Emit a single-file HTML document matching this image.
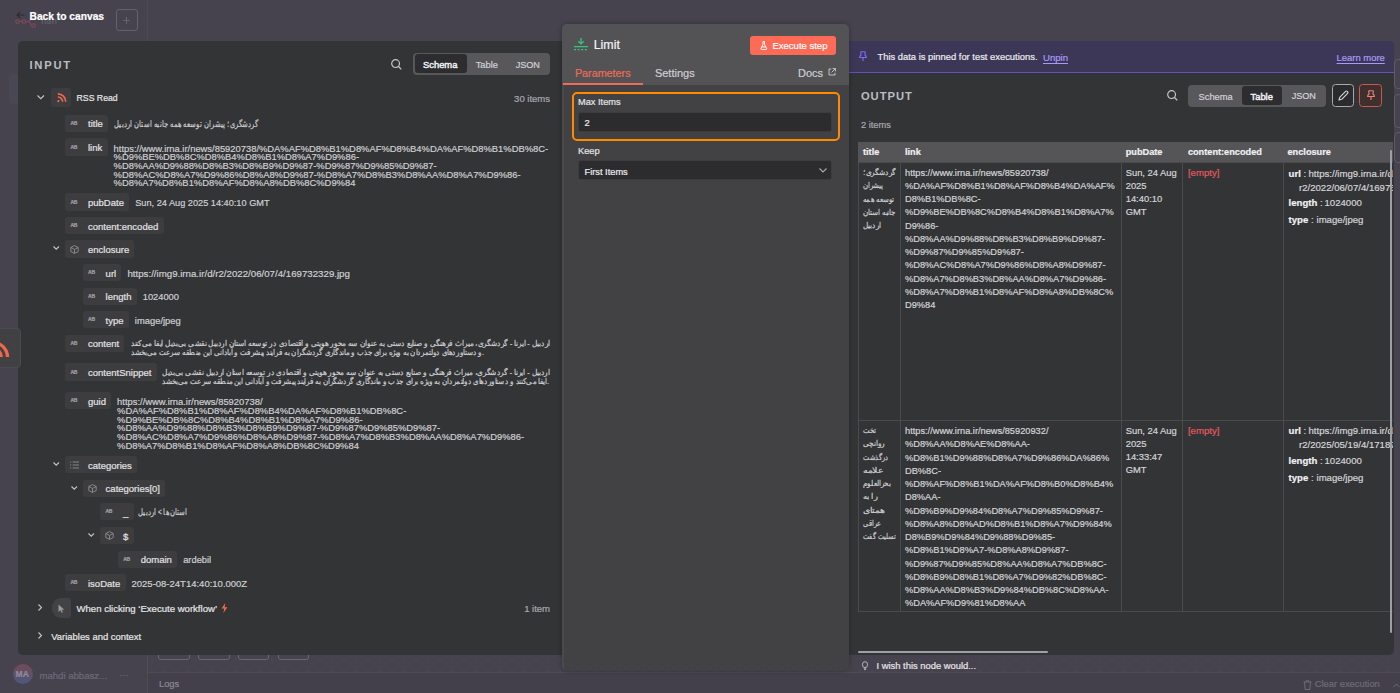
<!DOCTYPE html>
<html><head><meta charset="utf-8"><style>
*{box-sizing:border-box;margin:0;padding:0}
html,body{width:1400px;height:693px;overflow:hidden}
body{background:#46434f;font-family:"Liberation Sans",sans-serif;color:#e6e6e8;position:relative}
.a{position:absolute;white-space:nowrap;line-height:1;-webkit-text-stroke:0.2px currentColor}
svg{position:absolute;overflow:visible}
</style></head><body>
<div class="a" style="left:8.50px;top:74.00px;width:14.00px;height:30.00px;background:#4a4754;border-radius:3px"></div>
<div class="a" style="left:146.50px;top:0.00px;width:1.00px;height:41.00px;background:#4d4a56"></div>
<div class="a" style="left:147.00px;top:655.00px;width:1.00px;height:38.00px;background:#504d59"></div>
<div class="a" style="left:147.50px;top:672.00px;width:1253.00px;height:21.00px;background:#43404c;border-top:1px solid #4e4b58"></div>
<svg style="left:0;top:659px" width="1400" height="2"><g fill="#5a5766"><circle cx="152" cy="0" r="0.6"/><circle cx="164" cy="0" r="0.6"/><circle cx="176" cy="0" r="0.6"/><circle cx="188" cy="0" r="0.6"/><circle cx="200" cy="0" r="0.6"/><circle cx="212" cy="0" r="0.6"/><circle cx="224" cy="0" r="0.6"/><circle cx="236" cy="0" r="0.6"/><circle cx="248" cy="0" r="0.6"/><circle cx="260" cy="0" r="0.6"/><circle cx="272" cy="0" r="0.6"/><circle cx="284" cy="0" r="0.6"/><circle cx="296" cy="0" r="0.6"/><circle cx="308" cy="0" r="0.6"/><circle cx="320" cy="0" r="0.6"/><circle cx="332" cy="0" r="0.6"/><circle cx="344" cy="0" r="0.6"/><circle cx="356" cy="0" r="0.6"/><circle cx="368" cy="0" r="0.6"/><circle cx="380" cy="0" r="0.6"/><circle cx="392" cy="0" r="0.6"/><circle cx="404" cy="0" r="0.6"/><circle cx="416" cy="0" r="0.6"/><circle cx="428" cy="0" r="0.6"/><circle cx="440" cy="0" r="0.6"/><circle cx="452" cy="0" r="0.6"/><circle cx="464" cy="0" r="0.6"/><circle cx="476" cy="0" r="0.6"/><circle cx="488" cy="0" r="0.6"/><circle cx="500" cy="0" r="0.6"/><circle cx="512" cy="0" r="0.6"/><circle cx="524" cy="0" r="0.6"/><circle cx="536" cy="0" r="0.6"/><circle cx="548" cy="0" r="0.6"/><circle cx="560" cy="0" r="0.6"/><circle cx="572" cy="0" r="0.6"/><circle cx="584" cy="0" r="0.6"/><circle cx="596" cy="0" r="0.6"/><circle cx="608" cy="0" r="0.6"/><circle cx="620" cy="0" r="0.6"/><circle cx="632" cy="0" r="0.6"/><circle cx="644" cy="0" r="0.6"/><circle cx="656" cy="0" r="0.6"/><circle cx="668" cy="0" r="0.6"/><circle cx="680" cy="0" r="0.6"/><circle cx="692" cy="0" r="0.6"/><circle cx="704" cy="0" r="0.6"/><circle cx="716" cy="0" r="0.6"/><circle cx="728" cy="0" r="0.6"/><circle cx="740" cy="0" r="0.6"/><circle cx="752" cy="0" r="0.6"/><circle cx="764" cy="0" r="0.6"/><circle cx="776" cy="0" r="0.6"/><circle cx="788" cy="0" r="0.6"/><circle cx="800" cy="0" r="0.6"/><circle cx="812" cy="0" r="0.6"/><circle cx="824" cy="0" r="0.6"/><circle cx="836" cy="0" r="0.6"/><circle cx="848" cy="0" r="0.6"/><circle cx="860" cy="0" r="0.6"/><circle cx="872" cy="0" r="0.6"/><circle cx="884" cy="0" r="0.6"/><circle cx="896" cy="0" r="0.6"/><circle cx="908" cy="0" r="0.6"/><circle cx="920" cy="0" r="0.6"/><circle cx="932" cy="0" r="0.6"/><circle cx="944" cy="0" r="0.6"/><circle cx="956" cy="0" r="0.6"/><circle cx="968" cy="0" r="0.6"/><circle cx="980" cy="0" r="0.6"/><circle cx="992" cy="0" r="0.6"/><circle cx="1004" cy="0" r="0.6"/><circle cx="1016" cy="0" r="0.6"/><circle cx="1028" cy="0" r="0.6"/><circle cx="1040" cy="0" r="0.6"/><circle cx="1052" cy="0" r="0.6"/><circle cx="1064" cy="0" r="0.6"/><circle cx="1076" cy="0" r="0.6"/><circle cx="1088" cy="0" r="0.6"/><circle cx="1100" cy="0" r="0.6"/><circle cx="1112" cy="0" r="0.6"/><circle cx="1124" cy="0" r="0.6"/><circle cx="1136" cy="0" r="0.6"/><circle cx="1148" cy="0" r="0.6"/><circle cx="1160" cy="0" r="0.6"/><circle cx="1172" cy="0" r="0.6"/><circle cx="1184" cy="0" r="0.6"/><circle cx="1196" cy="0" r="0.6"/><circle cx="1208" cy="0" r="0.6"/><circle cx="1220" cy="0" r="0.6"/><circle cx="1232" cy="0" r="0.6"/><circle cx="1244" cy="0" r="0.6"/><circle cx="1256" cy="0" r="0.6"/><circle cx="1268" cy="0" r="0.6"/><circle cx="1280" cy="0" r="0.6"/><circle cx="1292" cy="0" r="0.6"/><circle cx="1304" cy="0" r="0.6"/><circle cx="1316" cy="0" r="0.6"/><circle cx="1328" cy="0" r="0.6"/><circle cx="1340" cy="0" r="0.6"/><circle cx="1352" cy="0" r="0.6"/><circle cx="1364" cy="0" r="0.6"/><circle cx="1376" cy="0" r="0.6"/><circle cx="1388" cy="0" r="0.6"/></g></svg>
<svg style="left:0;top:671px" width="1400" height="2"><g fill="#5a5766"><circle cx="152" cy="0" r="0.6"/><circle cx="164" cy="0" r="0.6"/><circle cx="176" cy="0" r="0.6"/><circle cx="188" cy="0" r="0.6"/><circle cx="200" cy="0" r="0.6"/><circle cx="212" cy="0" r="0.6"/><circle cx="224" cy="0" r="0.6"/><circle cx="236" cy="0" r="0.6"/><circle cx="248" cy="0" r="0.6"/><circle cx="260" cy="0" r="0.6"/><circle cx="272" cy="0" r="0.6"/><circle cx="284" cy="0" r="0.6"/><circle cx="296" cy="0" r="0.6"/><circle cx="308" cy="0" r="0.6"/><circle cx="320" cy="0" r="0.6"/><circle cx="332" cy="0" r="0.6"/><circle cx="344" cy="0" r="0.6"/><circle cx="356" cy="0" r="0.6"/><circle cx="368" cy="0" r="0.6"/><circle cx="380" cy="0" r="0.6"/><circle cx="392" cy="0" r="0.6"/><circle cx="404" cy="0" r="0.6"/><circle cx="416" cy="0" r="0.6"/><circle cx="428" cy="0" r="0.6"/><circle cx="440" cy="0" r="0.6"/><circle cx="452" cy="0" r="0.6"/><circle cx="464" cy="0" r="0.6"/><circle cx="476" cy="0" r="0.6"/><circle cx="488" cy="0" r="0.6"/><circle cx="500" cy="0" r="0.6"/><circle cx="512" cy="0" r="0.6"/><circle cx="524" cy="0" r="0.6"/><circle cx="536" cy="0" r="0.6"/><circle cx="548" cy="0" r="0.6"/><circle cx="560" cy="0" r="0.6"/><circle cx="572" cy="0" r="0.6"/><circle cx="584" cy="0" r="0.6"/><circle cx="596" cy="0" r="0.6"/><circle cx="608" cy="0" r="0.6"/><circle cx="620" cy="0" r="0.6"/><circle cx="632" cy="0" r="0.6"/><circle cx="644" cy="0" r="0.6"/><circle cx="656" cy="0" r="0.6"/><circle cx="668" cy="0" r="0.6"/><circle cx="680" cy="0" r="0.6"/><circle cx="692" cy="0" r="0.6"/><circle cx="704" cy="0" r="0.6"/><circle cx="716" cy="0" r="0.6"/><circle cx="728" cy="0" r="0.6"/><circle cx="740" cy="0" r="0.6"/><circle cx="752" cy="0" r="0.6"/><circle cx="764" cy="0" r="0.6"/><circle cx="776" cy="0" r="0.6"/><circle cx="788" cy="0" r="0.6"/><circle cx="800" cy="0" r="0.6"/><circle cx="812" cy="0" r="0.6"/><circle cx="824" cy="0" r="0.6"/><circle cx="836" cy="0" r="0.6"/><circle cx="848" cy="0" r="0.6"/><circle cx="860" cy="0" r="0.6"/><circle cx="872" cy="0" r="0.6"/><circle cx="884" cy="0" r="0.6"/><circle cx="896" cy="0" r="0.6"/><circle cx="908" cy="0" r="0.6"/><circle cx="920" cy="0" r="0.6"/><circle cx="932" cy="0" r="0.6"/><circle cx="944" cy="0" r="0.6"/><circle cx="956" cy="0" r="0.6"/><circle cx="968" cy="0" r="0.6"/><circle cx="980" cy="0" r="0.6"/><circle cx="992" cy="0" r="0.6"/><circle cx="1004" cy="0" r="0.6"/><circle cx="1016" cy="0" r="0.6"/><circle cx="1028" cy="0" r="0.6"/><circle cx="1040" cy="0" r="0.6"/><circle cx="1052" cy="0" r="0.6"/><circle cx="1064" cy="0" r="0.6"/><circle cx="1076" cy="0" r="0.6"/><circle cx="1088" cy="0" r="0.6"/><circle cx="1100" cy="0" r="0.6"/><circle cx="1112" cy="0" r="0.6"/><circle cx="1124" cy="0" r="0.6"/><circle cx="1136" cy="0" r="0.6"/><circle cx="1148" cy="0" r="0.6"/><circle cx="1160" cy="0" r="0.6"/><circle cx="1172" cy="0" r="0.6"/><circle cx="1184" cy="0" r="0.6"/><circle cx="1196" cy="0" r="0.6"/><circle cx="1208" cy="0" r="0.6"/><circle cx="1220" cy="0" r="0.6"/><circle cx="1232" cy="0" r="0.6"/><circle cx="1244" cy="0" r="0.6"/><circle cx="1256" cy="0" r="0.6"/><circle cx="1268" cy="0" r="0.6"/><circle cx="1280" cy="0" r="0.6"/><circle cx="1292" cy="0" r="0.6"/><circle cx="1304" cy="0" r="0.6"/><circle cx="1316" cy="0" r="0.6"/><circle cx="1328" cy="0" r="0.6"/><circle cx="1340" cy="0" r="0.6"/><circle cx="1352" cy="0" r="0.6"/><circle cx="1364" cy="0" r="0.6"/><circle cx="1376" cy="0" r="0.6"/><circle cx="1388" cy="0" r="0.6"/></g></svg>
<svg style="left:14.6px;top:15.6px" width="22" height="12" viewBox="0 0 22 12"><g fill="none" stroke="#86475c" stroke-width="1.1"><circle cx="2.5" cy="5.5" r="1.8"/><circle cx="9" cy="5.5" r="1.8"/><circle cx="18.5" cy="9.5" r="1.8"/><circle cx="18.5" cy="1.8" r="1.6"/><path d="M4.3 5.5h2.9M10.8 5.5h2.5q1.5 0 2.2 2l.8 1.5M13.3 5.5q1.5 0 2.2-2l.8-1.3"/></g></svg>
<div class="a " style="left:41.00px;top:16.88px;font-size:9px;color:#5e5b68;font-weight:bold;">n8n</div>
<svg style="left:16px;top:11px" width="9" height="8" viewBox="0 0 9 8"><path d="M8.5 4H1M4.2 0.8L1 4l3.2 3.2" fill="none" stroke="#2b2a30" stroke-width="1.1"/></svg>
<div class="a " style="left:29.50px;top:11.53px;font-size:10.24px;color:#ffffff;font-weight:bold;">Back to canvas</div>
<div class="a" style="left:115.50px;top:9.20px;width:22.00px;height:22.00px;border:1px solid #64616e;border-radius:3px"></div>
<svg style="left:123px;top:16.7px" width="7" height="7" viewBox="0 0 7 7"><path d="M3.5 0v7M0 3.5h7" stroke="#6a6773" stroke-width="0.9"/></svg>
<div class="a" style="left:13.4px;top:663.8px;width:20px;height:20px;border-radius:50%;background:linear-gradient(#7b4a55,#4a5b86);opacity:.9"></div>
<div class="a " style="left:15.60px;top:670.30px;font-size:8.5px;color:#8f8c99;font-weight:bold;">MA</div>
<div class="a " style="left:39.40px;top:670.57px;font-size:9.6px;color:#6d6a77;font-weight:normal;">mahdi abbasz...</div>
<div class="a " style="left:119.50px;top:671.38px;font-size:9px;color:#6d6a77;font-weight:normal;">···</div>
<div class="a" style="left:158.40px;top:640.00px;width:31.20px;height:19.60px;border:1px solid #6a6775;border-radius:3px"></div>
<div class="a" style="left:198.40px;top:640.00px;width:31.20px;height:19.60px;border:1px solid #6a6775;border-radius:3px"></div>
<div class="a" style="left:238.00px;top:640.00px;width:31.20px;height:19.60px;border:1px solid #6a6775;border-radius:3px"></div>
<div class="a" style="left:277.60px;top:640.00px;width:31.20px;height:19.60px;border:1px solid #6a6775;border-radius:3px"></div>
<div class="a " style="left:159.00px;top:679.59px;font-size:9.22px;color:#8c8996;font-weight:normal;">Logs</div>
<svg style="left:1303px;top:679.5px" width="9" height="10" viewBox="0 0 9 10"><g fill="none" stroke="#6e6b78" stroke-width="1"><path d="M0.5 2h8M3 2V0.8h3V2M1.5 2l.6 7.5h4.8L7.5 2"/></g></svg>
<div class="a " style="left:1314.70px;top:678.94px;font-size:9.4px;color:#6e6b78;font-weight:normal;">Clear execution</div>
<svg style="left:1393px;top:682.5px" width="7" height="5" viewBox="0 0 7 5"><path d="M0.5 4.2L3.5 1l3 3.2" fill="none" stroke="#6e6b78" stroke-width="1"/></svg>
<div class="a" style="left:1394.30px;top:59.00px;width:20.00px;height:30.00px;border:1px solid #5e5b68;border-radius:4px"></div>
<div class="a" style="left:1394.30px;top:94.00px;width:20.00px;height:33.60px;border:1px solid #5e5b68;border-radius:4px"></div>
<div class="a" style="left:1394.30px;top:132.40px;width:20.00px;height:30.40px;border:1px solid #5e5b68;border-radius:4px"></div>
<div class="a" style="left:18.00px;top:41.00px;width:548.00px;height:614.00px;background:#333436;border-radius:5px 0 0 5px"></div>
<div class="a " style="left:29.40px;top:59.52px;font-size:11.2px;color:#bdbdc2;font-weight:bold;letter-spacing:1.8px;-webkit-text-stroke:0">INPUT</div>
<svg style="left:391.00px;top:59.00px" width="11" height="11" viewBox="0 0 11 11"><g fill="none" stroke="#c8c8cc" stroke-width="1.2"><circle cx="4.6" cy="4.6" r="3.9"/><path d="M7.5 7.5L10.3 10.3"/></g></svg>
<div class="a" style="left:413.00px;top:53.00px;width:137.00px;height:22.00px;background:#58585b;border-radius:4px"></div>
<div class="a" style="left:414.60px;top:54.20px;width:52.40px;height:19.00px;background:#2d2d2f;border-radius:3px"></div>
<div class="a " style="left:423.00px;top:60.24px;font-size:9.4px;color:#f2f2f4;font-weight:normal;-webkit-text-stroke:0.45px #f2f2f4">Schema</div>
<div class="a " style="left:475.70px;top:61.03px;font-size:9.3px;color:#d2d2d6;font-weight:normal;">Table</div>
<div class="a " style="left:515.70px;top:60.50px;font-size:9.1px;color:#d2d2d6;font-weight:normal;">JSON</div>
<div class="a " style="left:514.00px;top:94.36px;font-size:9.5px;color:#a9a9ae;font-weight:normal;width:36px;text-align:right">30 items</div>
<svg style="left:36.70px;top:95.30px" width="7.5" height="4.35" viewBox="0 0 7.5 4.35"><path d="M0.5 0.5L3.75 3.7499999999999996L7.0 0.5" fill="none" stroke="#c4c4c8" stroke-width="1.1"/></svg>
<div class="a" style="left:51.40px;top:88.00px;width:19.20px;height:19.20px;background:#3d3d40;border-radius:3px"></div>
<svg style="left:56.7px;top:93px" width="9.5" height="9.5" viewBox="0 0 10 10"><g fill="none" stroke="#ef6a4c" stroke-width="1.7"><path d="M0.9 4.2a5 5 0 0 1 5 5"/><path d="M0.9 0.9a8.3 8.3 0 0 1 8.3 8.3"/></g><circle cx="1.5" cy="8.5" r="1.2" fill="#ef6a4c"/></svg>
<div class="a " style="left:76.60px;top:94.33px;font-size:8.7px;color:#e6e6e8;font-weight:normal;-webkit-text-stroke:0.2px #e6e6e8">RSS Read</div>
<div class="a" style="left:65.00px;top:114.60px;width:43.08px;height:17.30px;background:#3d3d40;border-radius:3px"></div>
<div class="a" style="left:70.50px;top:120.80px;font-size:5px;color:#a0a0a4;font-weight:bold;letter-spacing:-0.3px">AB</div>
<div class="a " style="left:88.00px;top:119.46px;font-size:9.5px;color:#e2e2e4;font-weight:normal;">title</div>
<div class="a" style="left:113.90px;top:118.20px;font-size:8.5px;color:#cfcfd3;line-height:12px;direction:rtl;transform-origin:0 50%;transform:scale(0.7504,1.0)">گردشگری؛ پیشران توسعه همه جانبه استان اردبیل</div>
<div class="a" style="left:65.00px;top:138.30px;width:42.55px;height:17.30px;background:#3d3d40;border-radius:3px"></div>
<div class="a" style="left:70.50px;top:144.50px;font-size:5px;color:#a0a0a4;font-weight:bold;letter-spacing:-0.3px">AB</div>
<div class="a " style="left:88.00px;top:143.16px;font-size:9.5px;color:#e2e2e4;font-weight:normal;">link</div>
<div class="a " style="left:113.60px;top:143.64px;font-size:9.4px;color:#cfcfd3;font-weight:normal;">https://www.irna.ir/news/85920738/%DA%AF%D8%B1%D8%AF%D8%B4%DA%AF%D8%B1%DB%8C-</div>
<div class="a " style="left:113.60px;top:152.29px;font-size:9.4px;color:#cfcfd3;font-weight:normal;">%D9%BE%DB%8C%D8%B4%D8%B1%D8%A7%D9%86-</div>
<div class="a " style="left:113.60px;top:160.94px;font-size:9.4px;color:#cfcfd3;font-weight:normal;">%D8%AA%D9%88%D8%B3%D8%B9%D9%87-%D9%87%D9%85%D9%87-</div>
<div class="a " style="left:113.60px;top:169.59px;font-size:9.4px;color:#cfcfd3;font-weight:normal;">%D8%AC%D8%A7%D9%86%D8%A8%D9%87-%D8%A7%D8%B3%D8%AA%D8%A7%D9%86-</div>
<div class="a " style="left:113.60px;top:178.24px;font-size:9.4px;color:#cfcfd3;font-weight:normal;">%D8%A7%D8%B1%D8%AF%D8%A8%DB%8C%D9%84</div>
<div class="a" style="left:65.00px;top:193.30px;width:64.22px;height:17.30px;background:#3d3d40;border-radius:3px"></div>
<div class="a" style="left:70.50px;top:199.50px;font-size:5px;color:#a0a0a4;font-weight:bold;letter-spacing:-0.3px">AB</div>
<div class="a " style="left:88.00px;top:198.16px;font-size:9.5px;color:#e2e2e4;font-weight:normal;">pubDate</div>
<div class="a " style="left:135.22px;top:198.81px;font-size:9.2px;color:#cfcfd3;font-weight:normal;">Sun, 24 Aug 2025 14:40:10 GMT</div>
<div class="a" style="left:65.00px;top:217.00px;width:98.55px;height:17.30px;background:#3d3d40;border-radius:3px"></div>
<div class="a" style="left:70.50px;top:223.20px;font-size:5px;color:#a0a0a4;font-weight:bold;letter-spacing:-0.3px">AB</div>
<div class="a " style="left:88.00px;top:221.86px;font-size:9.5px;color:#e2e2e4;font-weight:normal;">content:encoded</div>
<svg style="left:52.80px;top:246.30px" width="6.5" height="3.85" viewBox="0 0 6.5 3.85"><path d="M0.5 0.5L3.25 3.25L6.0 0.5" fill="none" stroke="#c4c4c8" stroke-width="1.1"/></svg>
<div class="a" style="left:65.00px;top:240.40px;width:69.49px;height:17.30px;background:#3d3d40;border-radius:3px"></div>
<svg style="left:70.20px;top:244.60px" width="9" height="9" viewBox="0 0 9 9"><g fill="none" stroke="#8e8e92" stroke-width="0.9" stroke-linejoin="round"><path d="M4.5 0.6L8.2 2.5v4L4.5 8.4 0.8 6.5v-4z"/><path d="M0.8 2.5L4.5 4.4 8.2 2.5M4.5 4.4v4"/></g></svg>
<div class="a " style="left:88.00px;top:245.26px;font-size:9.5px;color:#e2e2e4;font-weight:normal;">enclosure</div>
<div class="a" style="left:82.60px;top:264.00px;width:38.86px;height:17.30px;background:#3d3d40;border-radius:3px"></div>
<div class="a" style="left:88.10px;top:270.20px;font-size:5px;color:#a0a0a4;font-weight:bold;letter-spacing:-0.3px">AB</div>
<div class="a " style="left:105.60px;top:268.86px;font-size:9.5px;color:#e2e2e4;font-weight:normal;">url</div>
<div class="a " style="left:127.46px;top:269.09px;font-size:9.7px;color:#cfcfd3;font-weight:normal;">https://img9.irna.ir/d/r2/2022/06/07/4/169732329.jpg</div>
<div class="a" style="left:82.60px;top:287.50px;width:54.18px;height:17.30px;background:#3d3d40;border-radius:3px"></div>
<div class="a" style="left:88.10px;top:293.70px;font-size:5px;color:#a0a0a4;font-weight:bold;letter-spacing:-0.3px">AB</div>
<div class="a " style="left:105.60px;top:292.36px;font-size:9.5px;color:#e2e2e4;font-weight:normal;">length</div>
<div class="a " style="left:142.78px;top:292.93px;font-size:9.3px;color:#cfcfd3;font-weight:normal;">1024000</div>
<div class="a" style="left:82.60px;top:311.00px;width:46.26px;height:17.30px;background:#3d3d40;border-radius:3px"></div>
<div class="a" style="left:88.10px;top:317.20px;font-size:5px;color:#a0a0a4;font-weight:bold;letter-spacing:-0.3px">AB</div>
<div class="a " style="left:105.60px;top:315.86px;font-size:9.5px;color:#e2e2e4;font-weight:normal;">type</div>
<div class="a " style="left:134.86px;top:316.34px;font-size:9.4px;color:#cfcfd3;font-weight:normal;">image/jpeg</div>
<div class="a" style="left:65.00px;top:334.60px;width:59.46px;height:17.30px;background:#3d3d40;border-radius:3px"></div>
<div class="a" style="left:70.50px;top:340.80px;font-size:5px;color:#a0a0a4;font-weight:bold;letter-spacing:-0.3px">AB</div>
<div class="a " style="left:88.00px;top:339.46px;font-size:9.5px;color:#e2e2e4;font-weight:normal;">content</div>
<div class="a" style="left:131.00px;top:338.70px;font-size:7.8px;color:#cfcfd3;line-height:9px;direction:rtl;transform-origin:0 50%;transform:scale(0.9145,1.0)">اردبیل - ایرنا - گردشگری، میراث فرهنگی و صنایع دستی به عنوان سه محور هویتی و اقتصادی در توسعه استان اردبیل نقشی بی‌بدیل ایفا می‌کنند</div>
<div class="a" style="left:131.00px;top:347.70px;font-size:7.8px;color:#cfcfd3;line-height:9px;direction:rtl;transform-origin:0 50%;transform:scale(0.8933,1.0)">.و دستاوردهای دولتمردان به ویژه برای جذب و ماندگاری گردشگران به فرایند پیشرفت و آبادانی این منطقه سرعت می‌بخشد</div>
<div class="a" style="left:65.00px;top:363.40px;width:91.68px;height:17.30px;background:#3d3d40;border-radius:3px"></div>
<div class="a" style="left:70.50px;top:369.60px;font-size:5px;color:#a0a0a4;font-weight:bold;letter-spacing:-0.3px">AB</div>
<div class="a " style="left:88.00px;top:368.26px;font-size:9.5px;color:#e2e2e4;font-weight:normal;">contentSnippet</div>
<div class="a" style="left:162.00px;top:368.20px;font-size:7.8px;color:#cfcfd3;line-height:9px;direction:rtl;transform-origin:0 50%;transform:scale(0.9219,1.0)">اردبیل - ایرنا - گردشگری، میراث فرهنگی و صنایع دستی به عنوان سه محور هویتی و اقتصادی در توسعه استان اردبیل نقشی بی‌بدیل</div>
<div class="a" style="left:162.00px;top:377.20px;font-size:7.8px;color:#cfcfd3;line-height:9px;direction:rtl;transform-origin:0 50%;transform:scale(0.8948,1.0)">.ایفا می‌کنند و دستاوردهای دولتمردان به ویژه برای جذب و ماندگاری گردشگران به فرایند پیشرفت و آبادانی این منطقه سرعت می‌بخشد</div>
<div class="a" style="left:65.00px;top:392.10px;width:46.26px;height:17.30px;background:#3d3d40;border-radius:3px"></div>
<div class="a" style="left:70.50px;top:398.30px;font-size:5px;color:#a0a0a4;font-weight:bold;letter-spacing:-0.3px">AB</div>
<div class="a " style="left:88.00px;top:396.96px;font-size:9.5px;color:#e2e2e4;font-weight:normal;">guid</div>
<div class="a " style="left:117.10px;top:397.44px;font-size:9.4px;color:#cfcfd3;font-weight:normal;">https://www.irna.ir/news/85920738/</div>
<div class="a " style="left:117.10px;top:406.09px;font-size:9.4px;color:#cfcfd3;font-weight:normal;">%DA%AF%D8%B1%D8%AF%D8%B4%DA%AF%D8%B1%DB%8C-</div>
<div class="a " style="left:117.10px;top:414.74px;font-size:9.4px;color:#cfcfd3;font-weight:normal;">%D9%BE%DB%8C%D8%B4%D8%B1%D8%A7%D9%86-</div>
<div class="a " style="left:117.10px;top:423.39px;font-size:9.4px;color:#cfcfd3;font-weight:normal;">%D8%AA%D9%88%D8%B3%D8%B9%D9%87-%D9%87%D9%85%D9%87-</div>
<div class="a " style="left:117.10px;top:432.04px;font-size:9.4px;color:#cfcfd3;font-weight:normal;">%D8%AC%D8%A7%D9%86%D8%A8%D9%87-%D8%A7%D8%B3%D8%AA%D8%A7%D9%86-</div>
<div class="a " style="left:117.10px;top:440.69px;font-size:9.4px;color:#cfcfd3;font-weight:normal;">%D8%A7%D8%B1%D8%AF%D8%A8%DB%8C%D9%84</div>
<svg style="left:52.80px;top:462.00px" width="6.5" height="3.85" viewBox="0 0 6.5 3.85"><path d="M0.5 0.5L3.25 3.25L6.0 0.5" fill="none" stroke="#c4c4c8" stroke-width="1.1"/></svg>
<div class="a" style="left:65.00px;top:456.00px;width:72.13px;height:17.30px;background:#3d3d40;border-radius:3px"></div>
<svg style="left:70.20px;top:460.60px" width="9" height="8" viewBox="0 0 9 8"><g stroke="#8e8e92" stroke-width="0.9"><path d="M0 1h1.2M0 4h1.2M0 7h1.2M2.6 1H9M2.6 4H9M2.6 7H9"/></g></svg>
<div class="a " style="left:88.00px;top:460.86px;font-size:9.5px;color:#e2e2e4;font-weight:normal;">categories</div>
<svg style="left:70.60px;top:485.50px" width="6.5" height="3.85" viewBox="0 0 6.5 3.85"><path d="M0.5 0.5L3.25 3.25L6.0 0.5" fill="none" stroke="#c4c4c8" stroke-width="1.1"/></svg>
<div class="a" style="left:82.60px;top:479.50px;width:82.69px;height:17.30px;background:#3d3d40;border-radius:3px"></div>
<svg style="left:87.80px;top:483.70px" width="9" height="9" viewBox="0 0 9 9"><g fill="none" stroke="#8e8e92" stroke-width="0.9" stroke-linejoin="round"><path d="M4.5 0.6L8.2 2.5v4L4.5 8.4 0.8 6.5v-4z"/><path d="M0.8 2.5L4.5 4.4 8.2 2.5M4.5 4.4v4"/></g></svg>
<div class="a " style="left:105.60px;top:484.36px;font-size:9.5px;color:#e2e2e4;font-weight:normal;">categories[0]</div>
<div class="a" style="left:100.00px;top:503.00px;width:33.58px;height:17.30px;background:#3d3d40;border-radius:3px"></div>
<div class="a" style="left:105.50px;top:509.20px;font-size:5px;color:#a0a0a4;font-weight:bold;letter-spacing:-0.3px">AB</div>
<div class="a " style="left:123.00px;top:507.86px;font-size:9.5px;color:#e2e2e4;font-weight:normal;">_</div>
<div class="a" style="left:138.30px;top:506.00px;font-size:8.5px;color:#cfcfd3;line-height:12px;direction:rtl;transform-origin:0 50%;transform:scale(0.7566,1.0)">استان‌ها &gt; اردبیل</div>
<svg style="left:88.00px;top:533.00px" width="6.5" height="3.85" viewBox="0 0 6.5 3.85"><path d="M0.5 0.5L3.25 3.25L6.0 0.5" fill="none" stroke="#c4c4c8" stroke-width="1.1"/></svg>
<div class="a" style="left:100.00px;top:527.00px;width:33.58px;height:17.30px;background:#3d3d40;border-radius:3px"></div>
<svg style="left:105.20px;top:531.20px" width="9" height="9" viewBox="0 0 9 9"><g fill="none" stroke="#8e8e92" stroke-width="0.9" stroke-linejoin="round"><path d="M4.5 0.6L8.2 2.5v4L4.5 8.4 0.8 6.5v-4z"/><path d="M0.8 2.5L4.5 4.4 8.2 2.5M4.5 4.4v4"/></g></svg>
<div class="a " style="left:123.00px;top:531.86px;font-size:9.5px;color:#e2e2e4;font-weight:normal;">$</div>
<div class="a" style="left:117.70px;top:550.50px;width:59.46px;height:17.30px;background:#3d3d40;border-radius:3px"></div>
<div class="a" style="left:123.20px;top:556.70px;font-size:5px;color:#a0a0a4;font-weight:bold;letter-spacing:-0.3px">AB</div>
<div class="a " style="left:140.70px;top:555.36px;font-size:9.5px;color:#e2e2e4;font-weight:normal;">domain</div>
<div class="a " style="left:183.16px;top:555.90px;font-size:9.33px;color:#cfcfd3;font-weight:normal;">ardebil</div>
<div class="a" style="left:65.00px;top:573.70px;width:60.51px;height:17.30px;background:#3d3d40;border-radius:3px"></div>
<div class="a" style="left:70.50px;top:579.90px;font-size:5px;color:#a0a0a4;font-weight:bold;letter-spacing:-0.3px">AB</div>
<div class="a " style="left:88.00px;top:578.56px;font-size:9.5px;color:#e2e2e4;font-weight:normal;">isoDate</div>
<div class="a " style="left:131.51px;top:578.96px;font-size:9.5px;color:#cfcfd3;font-weight:normal;">2025-08-24T14:40:10.000Z</div>
<svg style="left:38.00px;top:604.20px" width="4.1" height="7" viewBox="0 0 4.1 7"><path d="M0.5 0.5L3.4999999999999996 3.5L0.5 6.5" fill="none" stroke="#c4c4c8" stroke-width="1.1"/></svg>
<div class="a" style="left:52.00px;top:598.00px;width:18.60px;height:19.50px;background:#434346;border-radius:9px 3px 3px 9px"></div>
<svg style="left:58px;top:603.5px" width="7" height="9" viewBox="0 0 7 9"><path d="M0.5 0.5v7.5l2-1.8 1.3 2.6 1.2-.6-1.3-2.5h2.6z" fill="#9a9a9e"/></svg>
<div class="a " style="left:76.50px;top:604.19px;font-size:9.58px;color:#e6e6e8;font-weight:normal;">When clicking ‘Execute workflow’</div>
<svg style="left:221px;top:603px" width="7" height="10" viewBox="0 0 7 10"><path d="M4.2 0L0.6 5.6h2.6L2.4 10 6.4 4.2H3.7z" fill="#ef6a4c"/></svg>
<div class="a " style="left:514.00px;top:604.26px;font-size:9.5px;color:#a9a9ae;font-weight:normal;width:36px;text-align:right">1 item</div>
<svg style="left:38.00px;top:632.20px" width="4.1" height="7" viewBox="0 0 4.1 7"><path d="M0.5 0.5L3.4999999999999996 3.5L0.5 6.5" fill="none" stroke="#c4c4c8" stroke-width="1.1"/></svg>
<div class="a " style="left:51.30px;top:631.52px;font-size:9.42px;color:#e6e6e8;font-weight:normal;">Variables and context</div>
<div class="a" style="left:845.00px;top:41.00px;width:548.50px;height:614.00px;background:#333436;border-radius:0 5px 5px 0"></div>
<div class="a" style="left:849.00px;top:41.00px;width:544.50px;height:32.00px;background:#3c3757;border-bottom:1.5px solid #5d52b8;border-radius:0 5px 0 0"></div>
<svg style="left:858.7px;top:50.9px" width="8" height="10.5" viewBox="0 0 8 10.5"><path d="M2.3 0.7h3.4q.7 0 .6.7l-.4 2.5q1.5 1 1.5 2.6H0.6q0-1.6 1.5-2.6l-.4-2.5q-.1-.7.6-.7z M4 6.6v3.4" fill="none" stroke="#7b6cf0" stroke-width="1.15" stroke-linejoin="round"/></svg>
<div class="a " style="left:877.50px;top:53.06px;font-size:9.38px;color:#ececf0;font-weight:normal;">This data is pinned for test executions.</div>
<div class="a " style="left:1043.00px;top:52.90px;font-size:9.57px;color:#a99bf5;font-weight:normal;text-decoration:underline;text-underline-offset:1.5px">Unpin</div>
<div class="a " style="left:1336.60px;top:53.02px;font-size:9.43px;color:#a99bf5;font-weight:normal;text-decoration:underline;text-underline-offset:1.5px">Learn more</div>
<div class="a " style="left:860.90px;top:91.22px;font-size:11.2px;color:#bdbdc2;font-weight:bold;letter-spacing:1.0px;-webkit-text-stroke:0">OUTPUT</div>
<div class="a " style="left:860.90px;top:120.62px;font-size:9.31px;color:#a9a9ae;font-weight:normal;">2 items</div>
<svg style="left:1167.00px;top:90.40px" width="11" height="11" viewBox="0 0 11 11"><g fill="none" stroke="#c8c8cc" stroke-width="1.2"><circle cx="4.6" cy="4.6" r="3.9"/><path d="M7.5 7.5L10.3 10.3"/></g></svg>
<div class="a" style="left:1188.40px;top:84.60px;width:137.50px;height:22.20px;background:#58585b;border-radius:4px"></div>
<div class="a" style="left:1242.00px;top:86.40px;width:40.00px;height:18.80px;background:#2d2d2f;border-radius:3px"></div>
<div class="a " style="left:1198.60px;top:92.53px;font-size:9.3px;color:#d2d2d6;font-weight:normal;">Schema</div>
<div class="a " style="left:1250.50px;top:91.84px;font-size:9.4px;color:#f2f2f4;font-weight:normal;-webkit-text-stroke:0.45px #f2f2f4">Table</div>
<div class="a " style="left:1291.70px;top:92.10px;font-size:9.1px;color:#d2d2d6;font-weight:normal;">JSON</div>
<div class="a" style="left:1331.50px;top:83.90px;width:22.40px;height:23.10px;background:#2b2b2d;border:1.7px solid #a9a9ad;border-radius:3.5px"></div>
<svg style="left:1337.5px;top:90.2px" width="11" height="11" viewBox="0 0 11 11"><path d="M1 10l.7-2.7 5.9-5.9q.8-.8 1.6 0l.4.4q.8.8 0 1.6L3.7 9.3z" fill="none" stroke="#d8d8dc" stroke-width="1.1" stroke-linejoin="round"/></svg>
<div class="a" style="left:1359.30px;top:84.00px;width:22.70px;height:22.90px;background:#3f2f2f;border:1.7px solid #c95a4b;border-radius:3.5px"></div>
<svg style="left:1366.7px;top:90px" width="8" height="10.5" viewBox="0 0 8 10.5"><path d="M2.3 0.7h3.4q.7 0 .6.7l-.4 2.5q1.5 1 1.5 2.6H0.6q0-1.6 1.5-2.6l-.4-2.5q-.1-.7.6-.7z M4 6.6v3.4" fill="none" stroke="#e88474" stroke-width="1.15" stroke-linejoin="round"/></svg>
<div class="a" style="left:858.00px;top:142.00px;width:535.00px;height:19.80px;background:#555557"></div>
<div class="a" style="left:858.00px;top:161.80px;width:535.00px;height:1.00px;background:#4b4b4e"></div>
<div class="a" style="left:858.00px;top:419.80px;width:535.00px;height:1.00px;background:#4b4b4e"></div>
<div class="a" style="left:858.00px;top:611.00px;width:535.00px;height:1.00px;background:#4b4b4e"></div>
<div class="a" style="left:858.00px;top:161.80px;width:1.00px;height:450.20px;background:#4b4b4e"></div>
<div class="a" style="left:900.30px;top:161.80px;width:1.00px;height:450.20px;background:#4b4b4e"></div>
<div class="a" style="left:1121.40px;top:161.80px;width:1.00px;height:450.20px;background:#4b4b4e"></div>
<div class="a" style="left:1182.30px;top:161.80px;width:1.00px;height:450.20px;background:#4b4b4e"></div>
<div class="a" style="left:1282.60px;top:161.80px;width:1.00px;height:450.20px;background:#4b4b4e"></div>
<div class="a " style="left:863.00px;top:148.01px;font-size:9.2px;color:#f0f0f2;font-weight:bold;">title</div>
<div class="a " style="left:905.00px;top:148.01px;font-size:9.2px;color:#f0f0f2;font-weight:bold;">link</div>
<div class="a " style="left:1125.70px;top:148.01px;font-size:9.2px;color:#f0f0f2;font-weight:bold;">pubDate</div>
<div class="a " style="left:1187.90px;top:148.01px;font-size:9.2px;color:#f0f0f2;font-weight:bold;">content:encoded</div>
<div class="a " style="left:1287.50px;top:148.01px;font-size:9.2px;color:#f0f0f2;font-weight:bold;">enclosure</div>
<div class="a " style="left:905.00px;top:168.57px;font-size:9.25px;color:#d4d4d8;font-weight:normal;">https://www.irna.ir/news/85920738/</div>
<div class="a " style="left:905.00px;top:181.82px;font-size:9.25px;color:#d4d4d8;font-weight:normal;">%DA%AF%D8%B1%D8%AF%D8%B4%DA%AF%</div>
<div class="a " style="left:905.00px;top:195.07px;font-size:9.25px;color:#d4d4d8;font-weight:normal;">D8%B1%DB%8C-</div>
<div class="a " style="left:905.00px;top:208.32px;font-size:9.25px;color:#d4d4d8;font-weight:normal;">%D9%BE%DB%8C%D8%B4%D8%B1%D8%A7%</div>
<div class="a " style="left:905.00px;top:221.57px;font-size:9.25px;color:#d4d4d8;font-weight:normal;">D9%86-</div>
<div class="a " style="left:905.00px;top:234.82px;font-size:9.25px;color:#d4d4d8;font-weight:normal;">%D8%AA%D9%88%D8%B3%D8%B9%D9%87-</div>
<div class="a " style="left:905.00px;top:248.07px;font-size:9.25px;color:#d4d4d8;font-weight:normal;">%D9%87%D9%85%D9%87-</div>
<div class="a " style="left:905.00px;top:261.32px;font-size:9.25px;color:#d4d4d8;font-weight:normal;">%D8%AC%D8%A7%D9%86%D8%A8%D9%87-</div>
<div class="a " style="left:905.00px;top:274.57px;font-size:9.25px;color:#d4d4d8;font-weight:normal;">%D8%A7%D8%B3%D8%AA%D8%A7%D9%86-</div>
<div class="a " style="left:905.00px;top:287.82px;font-size:9.25px;color:#d4d4d8;font-weight:normal;">%D8%A7%D8%B1%D8%AF%D8%A8%DB%8C%</div>
<div class="a " style="left:905.00px;top:301.07px;font-size:9.25px;color:#d4d4d8;font-weight:normal;">D9%84</div>
<div class="a " style="left:1125.70px;top:168.44px;font-size:9.4px;color:#d4d4d8;font-weight:normal;">Sun, 24 Aug</div>
<div class="a " style="left:1125.70px;top:181.44px;font-size:9.4px;color:#d4d4d8;font-weight:normal;">2025</div>
<div class="a " style="left:1125.70px;top:194.44px;font-size:9.4px;color:#d4d4d8;font-weight:normal;">14:40:10</div>
<div class="a " style="left:1125.70px;top:207.44px;font-size:9.4px;color:#d4d4d8;font-weight:normal;">GMT</div>
<div class="a " style="left:1187.90px;top:168.27px;font-size:9.6px;color:#e25a60;font-weight:normal;">[empty]</div>
<div class="a" style="left:863.10px;top:166.00px;font-size:8.3px;color:#cfcfd3;line-height:13px;direction:rtl;transform-origin:0 50%;transform:scale(0.9167,1.0)">گردشگری؛</div>
<div class="a" style="left:863.10px;top:179.25px;font-size:8.3px;color:#cfcfd3;line-height:13px;direction:rtl;transform-origin:0 50%;transform:scale(0.8522,1.0)">پیشران</div>
<div class="a" style="left:863.10px;top:192.50px;font-size:8.3px;color:#cfcfd3;line-height:13px;direction:rtl;transform-origin:0 50%;transform:scale(0.8592,1.0)">توسعه همه</div>
<div class="a" style="left:863.10px;top:205.75px;font-size:8.3px;color:#cfcfd3;line-height:13px;direction:rtl;transform-origin:0 50%;transform:scale(0.8895,1.0)">جانبه استان</div>
<div class="a" style="left:863.10px;top:219.00px;font-size:8.3px;color:#cfcfd3;line-height:13px;direction:rtl;transform-origin:0 50%;transform:scale(0.9000,1.0)">اردبیل</div>
<div class="a" style="left:1283px;top:150px;width:110px;height:500px;overflow:hidden;pointer-events:none">
<div class="a" style="left:5.60px;top:18.77px;font-size:9.6px;color:#f0f0f2;font-weight:bold">url</div>
<div class="a" style="left:20.50px;top:18.77px;font-size:9.6px;color:#cfcfd3;font-weight:normal">:</div>
<div class="a" style="left:25.50px;top:18.77px;font-size:9.6px;color:#d4d4d8;font-weight:normal">https://img9.irna.ir/d/</div>
<div class="a" style="left:16.00px;top:32.77px;font-size:9.6px;color:#d4d4d8;font-weight:normal">r2/2022/06/07/4/169732329.jpg</div>
<div class="a" style="left:5.60px;top:48.27px;font-size:9.6px;color:#f0f0f2;font-weight:bold">length</div>
<div class="a" style="left:37.00px;top:48.27px;font-size:9.6px;color:#cfcfd3;font-weight:normal">:</div>
<div class="a" style="left:41.50px;top:48.27px;font-size:9.6px;color:#d4d4d8;font-weight:normal">1024000</div>
<div class="a" style="left:5.60px;top:65.27px;font-size:9.6px;color:#f0f0f2;font-weight:bold">type</div>
<div class="a" style="left:28.00px;top:65.27px;font-size:9.6px;color:#cfcfd3;font-weight:normal">:</div>
<div class="a" style="left:33.50px;top:65.27px;font-size:9.6px;color:#d4d4d8;font-weight:normal">image/jpeg</div>
</div>
<div class="a " style="left:905.00px;top:427.17px;font-size:9.25px;color:#d4d4d8;font-weight:normal;">https://www.irna.ir/news/85920932/</div>
<div class="a " style="left:905.00px;top:440.42px;font-size:9.25px;color:#d4d4d8;font-weight:normal;">%D8%AA%D8%AE%D8%AA-</div>
<div class="a " style="left:905.00px;top:453.67px;font-size:9.25px;color:#d4d4d8;font-weight:normal;">%D8%B1%D9%88%D8%A7%D9%86%DA%86%</div>
<div class="a " style="left:905.00px;top:466.92px;font-size:9.25px;color:#d4d4d8;font-weight:normal;">DB%8C-</div>
<div class="a " style="left:905.00px;top:480.17px;font-size:9.25px;color:#d4d4d8;font-weight:normal;">%D8%AF%D8%B1%DA%AF%D8%B0%D8%B4%</div>
<div class="a " style="left:905.00px;top:493.42px;font-size:9.25px;color:#d4d4d8;font-weight:normal;">D8%AA-</div>
<div class="a " style="left:905.00px;top:506.67px;font-size:9.25px;color:#d4d4d8;font-weight:normal;">%D8%B9%D9%84%D8%A7%D9%85%D9%87-</div>
<div class="a " style="left:905.00px;top:519.92px;font-size:9.25px;color:#d4d4d8;font-weight:normal;">%D8%A8%D8%AD%D8%B1%D8%A7%D9%84%</div>
<div class="a " style="left:905.00px;top:533.17px;font-size:9.25px;color:#d4d4d8;font-weight:normal;">D8%B9%D9%84%D9%88%D9%85-</div>
<div class="a " style="left:905.00px;top:546.42px;font-size:9.25px;color:#d4d4d8;font-weight:normal;">%D8%B1%D8%A7-%D8%A8%D9%87-</div>
<div class="a " style="left:905.00px;top:559.67px;font-size:9.25px;color:#d4d4d8;font-weight:normal;">%D9%87%D9%85%D8%AA%D8%A7%DB%8C-</div>
<div class="a " style="left:905.00px;top:572.92px;font-size:9.25px;color:#d4d4d8;font-weight:normal;">%D8%B9%D8%B1%D8%A7%D9%82%DB%8C-</div>
<div class="a " style="left:905.00px;top:586.17px;font-size:9.25px;color:#d4d4d8;font-weight:normal;">%D8%AA%D8%B3%D9%84%DB%8C%D8%AA-</div>
<div class="a " style="left:905.00px;top:599.42px;font-size:9.25px;color:#d4d4d8;font-weight:normal;">%DA%AF%D9%81%D8%AA</div>
<div class="a " style="left:1125.70px;top:426.04px;font-size:9.4px;color:#d4d4d8;font-weight:normal;">Sun, 24 Aug</div>
<div class="a " style="left:1125.70px;top:439.04px;font-size:9.4px;color:#d4d4d8;font-weight:normal;">2025</div>
<div class="a " style="left:1125.70px;top:452.04px;font-size:9.4px;color:#d4d4d8;font-weight:normal;">14:33:47</div>
<div class="a " style="left:1125.70px;top:465.04px;font-size:9.4px;color:#d4d4d8;font-weight:normal;">GMT</div>
<div class="a " style="left:1187.90px;top:425.67px;font-size:9.6px;color:#e25a60;font-weight:normal;">[empty]</div>
<div class="a" style="left:862.90px;top:424.00px;font-size:8.3px;color:#cfcfd3;line-height:13px;direction:rtl;transform-origin:0 50%;transform:scale(0.8733,1.0)">تخت</div>
<div class="a" style="left:862.90px;top:437.25px;font-size:8.3px;color:#cfcfd3;line-height:13px;direction:rtl;transform-origin:0 50%;transform:scale(0.9208,1.0)">روانچی</div>
<div class="a" style="left:862.90px;top:450.50px;font-size:8.3px;color:#cfcfd3;line-height:13px;direction:rtl;transform-origin:0 50%;transform:scale(0.8194,1.0)">درگذشت</div>
<div class="a" style="left:862.90px;top:463.75px;font-size:8.3px;color:#cfcfd3;line-height:13px;direction:rtl;transform-origin:0 50%;transform:scale(1.1722,1.0)">علامه</div>
<div class="a" style="left:862.90px;top:477.00px;font-size:8.3px;color:#cfcfd3;line-height:13px;direction:rtl;transform-origin:0 50%;transform:scale(0.8935,1.0)">بحرالعلوم</div>
<div class="a" style="left:862.90px;top:490.25px;font-size:8.3px;color:#cfcfd3;line-height:13px;direction:rtl;transform-origin:0 50%;transform:scale(1.0201,1.0)">را به</div>
<div class="a" style="left:862.90px;top:503.50px;font-size:8.3px;color:#cfcfd3;line-height:13px;direction:rtl;transform-origin:0 50%;transform:scale(1.1632,1.0)">همتای</div>
<div class="a" style="left:862.90px;top:516.75px;font-size:8.3px;color:#cfcfd3;line-height:13px;direction:rtl;transform-origin:0 50%;transform:scale(0.8318,1.0)">عراقی</div>
<div class="a" style="left:862.90px;top:530.00px;font-size:8.3px;color:#cfcfd3;line-height:13px;direction:rtl;transform-origin:0 50%;transform:scale(0.8037,1.0)">تسلیت گفت</div>
<div class="a" style="left:1283px;top:150px;width:110px;height:500px;overflow:hidden;pointer-events:none">
<div class="a" style="left:5.60px;top:276.37px;font-size:9.6px;color:#f0f0f2;font-weight:bold">url</div>
<div class="a" style="left:20.50px;top:276.37px;font-size:9.6px;color:#cfcfd3;font-weight:normal">:</div>
<div class="a" style="left:25.50px;top:276.37px;font-size:9.6px;color:#d4d4d8;font-weight:normal">https://img9.irna.ir/d/</div>
<div class="a" style="left:16.00px;top:290.37px;font-size:9.6px;color:#d4d4d8;font-weight:normal">r2/2025/05/19/4/171873829.jpg</div>
<div class="a" style="left:5.60px;top:305.87px;font-size:9.6px;color:#f0f0f2;font-weight:bold">length</div>
<div class="a" style="left:37.00px;top:305.87px;font-size:9.6px;color:#cfcfd3;font-weight:normal">:</div>
<div class="a" style="left:41.50px;top:305.87px;font-size:9.6px;color:#d4d4d8;font-weight:normal">1024000</div>
<div class="a" style="left:5.60px;top:322.87px;font-size:9.6px;color:#f0f0f2;font-weight:bold">type</div>
<div class="a" style="left:28.00px;top:322.87px;font-size:9.6px;color:#cfcfd3;font-weight:normal">:</div>
<div class="a" style="left:33.50px;top:322.87px;font-size:9.6px;color:#d4d4d8;font-weight:normal">image/jpeg</div>
</div>
<div class="a" style="left:1389.60px;top:150.00px;width:2.00px;height:483.00px;background:#a0a0a4;border-radius:1px"></div>
<div class="a" style="left:858.00px;top:651.00px;width:190.00px;height:2.20px;background:#a0a0a4;border-radius:1px"></div>
<svg style="left:862px;top:660.5px" width="6" height="9" viewBox="0 0 6 9"><path d="M1.8 7.2h2.4M2 8.6h2M1.6 6.4Q0.4 5.2 0.5 3.2A2.5 2.5 0 0 1 5.5 3.2Q5.6 5.2 4.4 6.4z" fill="none" stroke="#c0c0c4" stroke-width="0.9"/></svg>
<div class="a " style="left:876.50px;top:660.94px;font-size:9.4px;color:#e6e6e8;font-weight:normal;">I wish this node would...</div>
<div class="a" style="left:562.00px;top:24.00px;width:286.50px;height:647.00px;background:#424244;border-radius:5px;box-shadow:0 0 5px rgba(0,0,0,.3);border-left:2px solid #4a4a4d"></div>
<div class="a" style="left:562.00px;top:24.00px;width:286.50px;height:60.50px;background:#535355;border-radius:5px 5px 0 0"></div>
<svg style="left:574.4px;top:38px" width="14" height="12.5" viewBox="0 0 14 12.5"><g fill="none" stroke="#3dbf7f" stroke-width="1.3"><path d="M7 0v5.6M4.3 3.2L7 5.9 9.7 3.2M0 8.6h14"/><path d="M0 11.6h14" stroke-dasharray="2 1.6"/></g></svg>
<div class="a " style="left:593.70px;top:38.90px;font-size:12.4px;color:#f4f4f6;font-weight:normal;font-weight:500">Limit</div>
<div class="a" style="left:749.70px;top:35.80px;width:86.80px;height:19.20px;background:#fd6b57;border-radius:3px"></div>
<svg style="left:760px;top:41px" width="7.5" height="9" viewBox="0 0 8 10"><g fill="none" stroke="#ffffff" stroke-width="1.1"><path d="M2.8 0.7h2.4M3.2 0.7v3L0.8 8.4q-.2 1 .7 1h5q.9 0 .7-1L4.8 3.7v-3M1.6 6.6h4.8"/></g></svg>
<div class="a " style="left:772.50px;top:41.26px;font-size:9.5px;color:#ffffff;font-weight:normal;">Execute step</div>
<div class="a " style="left:574.90px;top:67.67px;font-size:10.78px;color:#ef6b55;font-weight:normal;">Parameters</div>
<div class="a " style="left:654.90px;top:68.29px;font-size:11.0px;color:#cfcfd4;font-weight:normal;">Settings</div>
<div class="a" style="left:562.90px;top:82.90px;width:80.40px;height:2.00px;background:#ef6b55"></div>
<div class="a " style="left:798.00px;top:67.71px;font-size:10.97px;color:#cfcfd4;font-weight:normal;">Docs</div>
<svg style="left:828px;top:68px" width="8" height="8" viewBox="0 0 8 8"><g fill="none" stroke="#cfcfd4" stroke-width="0.9"><path d="M3.2 1H1v6h6V4.8M4.6 0.6h2.8v2.8M7.4 0.6L3.6 4.4"/></g></svg>
<div class="a" style="left:572.20px;top:92.20px;width:267.50px;height:49.10px;border:2px solid #ff8a00;border-radius:5px"></div>
<div class="a " style="left:578.00px;top:98.08px;font-size:9.24px;color:#e4e4e6;font-weight:normal;">Max Items</div>
<div class="a" style="left:578.30px;top:111.70px;width:254.00px;height:20.20px;background:#2c2c2e;border:1px solid #3d3d40;border-radius:3px"></div>
<div class="a " style="left:584.50px;top:118.14px;font-size:9.4px;color:#ececee;font-weight:normal;">2</div>
<div class="a " style="left:578.00px;top:146.93px;font-size:9.3px;color:#e4e4e6;font-weight:normal;">Keep</div>
<div class="a" style="left:578.30px;top:159.70px;width:254.00px;height:20.50px;background:#2c2c2e;border:1px solid #3d3d40;border-radius:3px"></div>
<div class="a " style="left:584.50px;top:167.54px;font-size:9.28px;color:#ececee;font-weight:normal;">First Items</div>
<svg style="left:818.50px;top:168.00px" width="8" height="4.6" viewBox="0 0 8 4.6"><path d="M0.5 0.5L4.0 3.9999999999999996L7.5 0.5" fill="none" stroke="#a8a8ac" stroke-width="1.1"/></svg>
<div class="a" style="left:-20.00px;top:328.00px;width:41.00px;height:39.50px;background:#414144;border:1px solid #4b4b4f;border-radius:4px"></div>
<svg style="left:-20px;top:330px" width="40" height="30" viewBox="0 0 40 30"><g fill="none" stroke="#f0674a" stroke-width="3.3" stroke-linecap="butt"><path d="M13.1 12.6A14.4 14.4 0 0 1 27.5 27"/><path d="M13.1 18.8A8.2 8.2 0 0 1 21.3 27"/></g></svg>
</body></html>
